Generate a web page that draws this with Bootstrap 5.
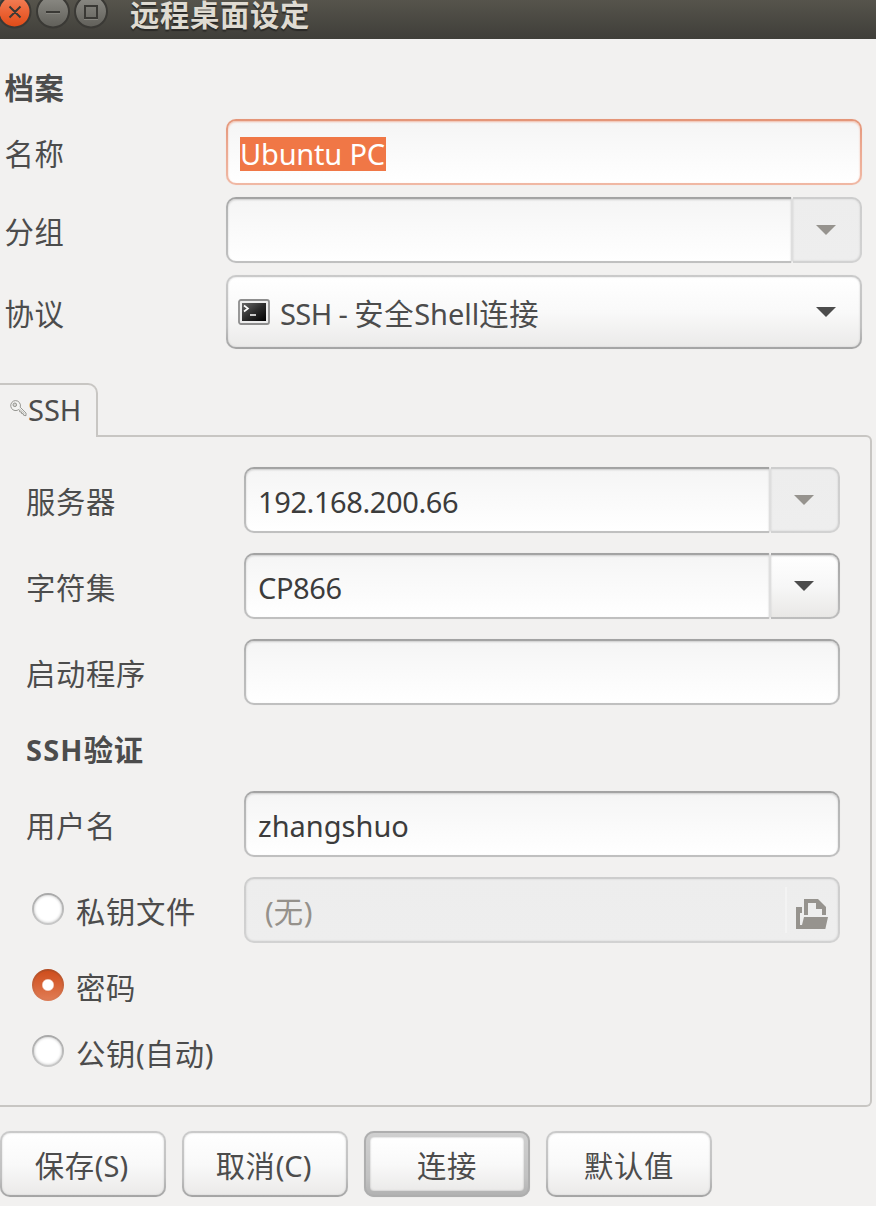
<!DOCTYPE html>
<html lang="zh-CN">
<head>
<meta charset="utf-8">
<meta name="viewport" content="width=device-width, initial-scale=1">
<title>远程桌面设定</title>
<link href="https://cdn.jsdelivr.net/npm/bootstrap@5.3.0/dist/css/bootstrap.min.css" rel="stylesheet">
<style>
body{width:876px;height:1206px;overflow:hidden;background:#f2f1f0;color:#4c4c4c;font-family:"Noto Sans","Noto Sans CJK SC",sans-serif;font-size:29px;line-height:40px;letter-spacing:0}
.zh{font-family:"Noto Sans CJK SC",sans-serif;font-size:29.33px;letter-spacing:.67px}
.titlebar{height:39px;background:linear-gradient(#56544c,#3f3e39)}
.titlebar svg{flex:none;margin-top:-4px}
.win-title{margin-left:22px;margin-top:-14px;line-height:28px;color:#dfdbd2;font-weight:700;text-shadow:0 2px 1px #2b2a27}
.form-line{display:grid;align-items:center}
.profile .form-line{grid-template-columns:221.500px 636px;padding-left:4.500px}
.session .form-line{grid-template-columns:218px 596px;padding-left:26px}
.h66{height:66px}.h74{height:74px}
.gtk{height:66px;padding:13px 0 0 12px;border:2px solid transparent;border-radius:10px;color:#3c3c3c;white-space:nowrap;
 background:linear-gradient(#f5f5f5,#fff) padding-box,linear-gradient(#a2a2a2,#b5b6b6 20%,#c0c0c0) border-box;
 box-shadow:inset 0 1px 2px #ccc,0 0 1px #ddd}
.gtk.focused{background:linear-gradient(#f5f5f5,#fff) padding-box,linear-gradient(#e49578,#eba78f 40%,#f0b8a4) border-box;box-shadow:inset 0 1px 2px #f0bba8,0 0 1px #f3d3c8}
.gtk.off{background:linear-gradient(#ededed,#eee) padding-box,linear-gradient(#cdcdcd,#d2d2d2) border-box;color:#95918b;box-shadow:inset 0 0 2px #ccc}
.gtk.raised{background:linear-gradient(#fff,#f9f9f9 50%,#ebeae9) padding-box,linear-gradient(#cacaca,#c0c0c0 70%,#a4a4a4) border-box;color:#4c4c4c;box-shadow:inset 0 0 2px #ccc,0 0 1px #ddd}
.gtk.left{border-radius:10px 0 0 10px;border-right-width:0}
.gtk.drop{width:71px;flex:none;border-radius:0 10px 10px 0;border-left:2px solid #dedede;padding:0 1px 0 0;display:flex;justify-content:center;align-items:center}
.gtk.drop.on{background:linear-gradient(#fff,#f7f7f7 50%,#e9e8e6) padding-box,linear-gradient(#a5a5a5,#bdbdbd) border-box}
.arrow{width:20px;height:10px;background:#4c4c4c;clip-path:polygon(0 0,100% 0,50% 100%)}
.off .arrow{background:#96938e}
.sel{display:inline-block;width:146px;height:34px;line-height:34px;background:#f07746;color:#fff}
.tab-ear{width:98px;height:54px;border:2px solid #c8c6c3;border-left:0;border-bottom:0;border-radius:0 10px 0 0;background:#f2f1f0;position:relative;z-index:1;margin-bottom:-2px;padding:0 0 2px 10px}
.session{width:872px;height:672px;border:2px solid #c8c6c3;border-left:0;border-radius:0 6px 6px 0;padding-top:30px}
.dot{width:32px;height:32px;border-radius:50%;border:2px solid transparent;background:linear-gradient(#fff,#fff) padding-box,linear-gradient(#a8a8a8,#c9c9c9) border-box;box-shadow:inset 0 0 3px #bbb;flex:none;margin:-2px 12px 0 0}
.dot.checked{background:radial-gradient(circle at 14px 14px,#fff 5px,transparent 6.5px) padding-box,linear-gradient(#cf4e1d,#e07a52) padding-box,linear-gradient(#b24a20,#dd7c56) border-box;box-shadow:none}
.radio-cap{padding-left:6px}
.sep{width:2px;height:46px;background:#f3f3f3;margin-right:9px}
.actions{gap:16px}
.actions .btn{width:166px;height:66px;padding:2px 3px 0 0;line-height:40px;text-align:center}
.actions .btn:last-child{padding:0}
.actions .btn:hover{color:#4c4c4c}
.actions .btn.default{padding:0;background:linear-gradient(#fff,#f9f9f9 50%,#ebeae9) padding-box,linear-gradient(#d0d0d0,#c2c2c2 70%,#b0b0b0) border-box;border-width:6px;box-shadow:inset 0 0 2px #aaa,0 0 1px #ccc;outline:2px solid #aeaeae;outline-offset:-2px}
.lat{font-family:"Noto Sans",sans-serif;font-size:29px;letter-spacing:0}
</style>
</head>
<body>
<header class="titlebar d-flex align-items-center">
 <svg width="108" height="35" viewBox="0 0 108 35">
  <defs>
   <linearGradient id="o" x2="0" y2="1"><stop stop-color="#f4845c"/><stop offset=".5" stop-color="#ec6436"/><stop offset="1" stop-color="#df4a16"/></linearGradient>
   <linearGradient id="g" x2="0" y2="1"><stop stop-color="#8d8c86"/><stop offset="1" stop-color="#605f59"/></linearGradient>
  </defs>
  <g stroke="#3a3935" stroke-width="2">
   <circle cx="14.500" cy="11.500" r="16" fill="url(#o)"/>
   <circle cx="53" cy="11.500" r="16" fill="url(#g)"/>
   <circle cx="91" cy="11.500" r="16" fill="url(#g)"/>
   <path d="M9.500 6.500l11 11m0-11l-11 11M46 12h14M85 6h12v12H85z" fill="none"/>
  </g>
  <path d="M46 13.500h14M84 19.500h14" stroke="#85847e"/>
 </svg>
 <span class="win-title zh">远程桌面设定</span>
</header>

<main>
 <section class="profile">
  <div class="form-line h66" style="margin-top:14px"><b class="zh">档案</b></div>
  <div class="form-line h66">
   <span class="zh">名称</span>
   <div class="gtk focused d-flex align-items-start" style="padding-top:16px"><span class="sel"><span style="letter-spacing:-.2px">Ubuntu PC</span></span></div>
  </div>
  <div class="form-line h66" style="margin-top:12px">
   <span class="zh">分组</span>
   <div class="d-flex"><div class="gtk left flex-fill"></div><div class="gtk drop off"><i class="arrow"></i></div></div>
  </div>
  <div class="form-line h74" style="margin-top:12px">
   <span class="zh">协议</span>
   <div class="gtk raised d-flex align-items-center" style="height:74px;padding:0 24px 0 10px">
    <svg width="32" height="28" viewBox="0 0 32 28" class="flex-shrink-0">
     <defs><linearGradient id="t" x2="1" y2="1"><stop stop-color="#666"/><stop offset=".5" stop-color="#2c2c2c"/><stop offset="1"/></linearGradient></defs>
     <rect x="1" y="2" width="30" height="24" rx="2" fill="#ededed" stroke="#8e8e8e" stroke-width="1.800"/>
     <rect x="4" y="5" width="24" height="18" fill="url(#t)"/>
     <path d="M6 7.500l4 3-4 3M12 17h6" fill="none" stroke="#fff" stroke-width="1.600"/>
    </svg>
    <span class="ms-2 flex-fill" style="padding:2px 0 0 2px"><span style="letter-spacing:-.6px">SSH - </span><span class="zh">安全</span><span>Shell</span><span class="zh">连接</span></span>
    <i class="arrow"></i>
   </div>
  </div>
 </section>

 <div class="tab-ear d-flex align-items-center" style="margin-top:34px">
  <svg width="17" height="17" viewBox="0 0 17 17" fill="none" stroke="#8b8b86" stroke-width=".9" style="margin-top:-3px">
   <path d="M5.500 .6a5 5 0 1 0 1.600 9.800L8.600 9.600l1 .8.100 1.400 1.700.2.200 1.500 1.600.2.400 1.500 2.400.5v-2.600L10.200 7.200A5 5 0 0 0 5.500 .6z" fill="#f4f4f2"/><circle cx="4.800" cy="4.800" r="1.800" fill="#d5d5d2"/><path d="M9.500 9l5 4.500" stroke="#b5b5b0"/>
  </svg>
  <span style="margin-left:1px">SSH</span>
 </div>

 <section class="session">
  <div class="form-line h66">
   <span class="zh">服务器</span>
   <div class="d-flex"><div class="gtk left flex-fill"><span style="letter-spacing:-.4px">192.168.200.66</span></div><div class="gtk drop off"><i class="arrow"></i></div></div>
  </div>
  <div class="form-line h66" style="margin-top:20px">
   <span class="zh">字符集</span>
   <div class="d-flex"><div class="gtk left flex-fill"><span style="letter-spacing:-.4px">CP866</span></div><div class="gtk drop on"><i class="arrow"></i></div></div>
  </div>
  <div class="form-line h66" style="margin-top:20px">
   <span class="zh">启动程序</span>
   <div class="gtk"></div>
  </div>
  <div class="form-line h66" style="margin-top:12px"><b class="text-nowrap" style="margin-top:-2px"><span style="letter-spacing:1.2px">SSH</span><span class="zh">验证</span></b></div>
  <div class="form-line h66" style="margin-top:8px">
   <span class="zh">用户名</span>
   <div class="gtk"><span>zhangshuo</span></div>
  </div>
  <div class="form-line h66" style="margin-top:20px">
   <div class="radio-cap d-flex align-items-center"><i class="dot"></i><span class="zh">私钥文件</span></div>
   <div class="gtk off d-flex align-items-center" style="padding:0 10px 0 19px">
    <span class="flex-fill" style="padding-top:2px">(<span class="zh">无</span>)</span><i class="sep"></i>
    <svg width="32" height="30" viewBox="0 0 96 90" fill="#96938e" style="margin-top:8px"><path d="M0 24H18V42H12V78H18L24 54H96L88 90H0z"/><path d="M24 48V0H66L90 24V48H78V30H60V12H36V48z"/></svg>
   </div>
  </div>
  <div class="form-line h66" style="margin-top:10px"><div class="radio-cap d-flex align-items-center"><i class="dot checked"></i><span class="zh">密码</span></div></div>
  <div class="form-line h66"><div class="radio-cap d-flex align-items-center"><i class="dot"></i><span class="zh text-nowrap" style="padding-top:1px">公钥<span class="lat">(</span>自动<span class="lat">)</span></span></div></div>
 </section>

 <footer class="actions d-flex" style="margin-top:24px">
  <button class="btn gtk raised zh">保存<span class="lat">(S)</span></button>
  <button class="btn gtk raised zh">取消<span class="lat">(C)</span></button>
  <button class="btn gtk raised default zh">连接</button>
  <button class="btn gtk raised zh">默认值</button>
 </footer>
</main>
<script src="https://cdn.jsdelivr.net/npm/bootstrap@5.3.0/dist/js/bootstrap.bundle.min.js"></script>
</body>
</html>
